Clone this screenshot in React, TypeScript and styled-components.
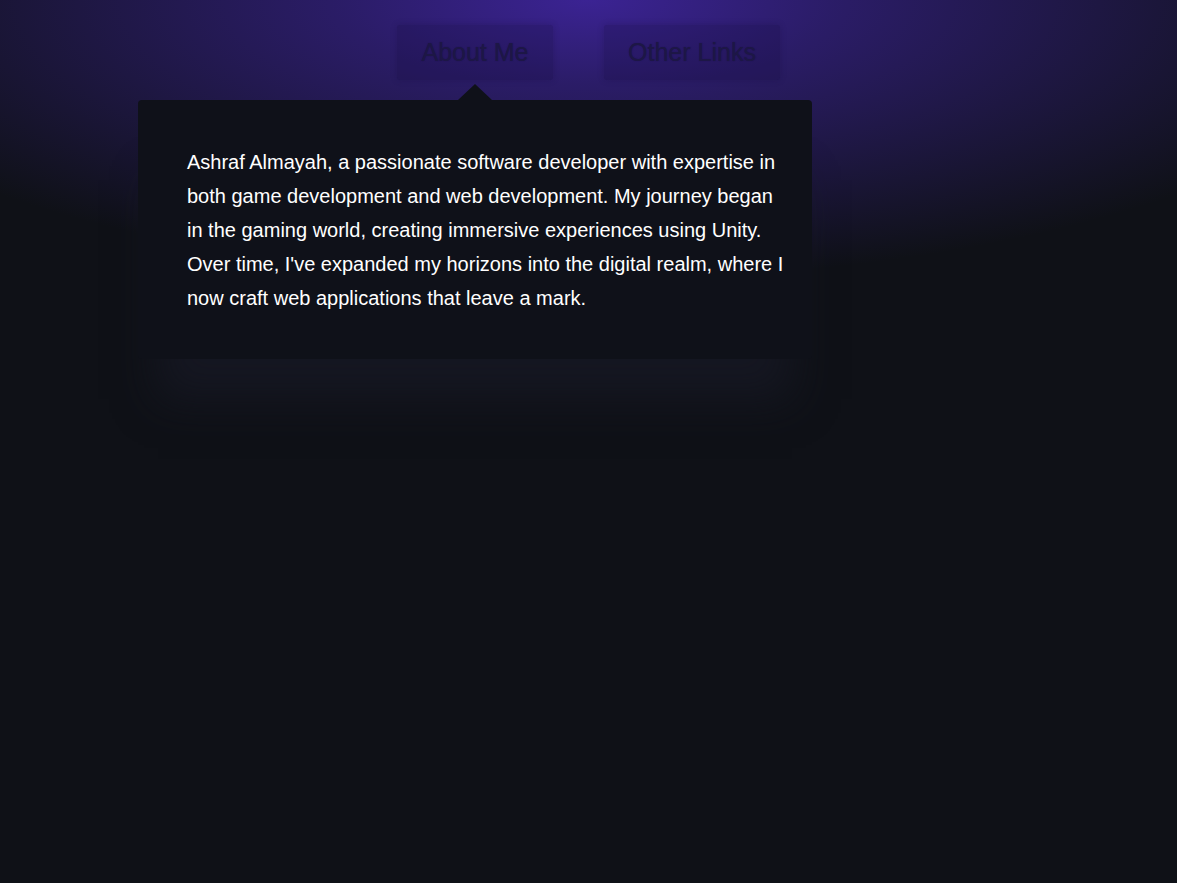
import React from "react";
import styled, { createGlobalStyle } from "styled-components";

const Global = createGlobalStyle`
  html, body { margin: 0; padding: 0; }
  body {
    background: #0f1117;
    font-family: "Liberation Sans", Arial, sans-serif;
  }
`;

const Page = styled.div`
  min-height: 883px;
  width: 100%;
  background:
    radial-gradient(ellipse 820px 280px at 50% 0, #3b2393 0%, rgba(52, 32, 130, 0.75) 30%, rgba(15, 17, 23, 0) 100%),
    #0f1117;
  display: flex;
  flex-direction: column;
  padding-top: 25px;
  box-sizing: border-box;
`;

const Nav = styled.nav`
  display: flex;
  justify-content: center;
  gap: 51px;
`;

const Tab = styled.button<{ $w: number }>`
  width: ${(p) => p.$w}px;
  height: 55px;
  border: none;
  border-radius: 3px;
  background: rgba(20, 10, 60, 0.22);
  color: #1d1746;
  font-family: "Liberation Sans", Arial, sans-serif;
  font-size: 25px;
  text-shadow: 0 0 1px rgba(20, 15, 60, 0.6);
  box-shadow: 0 0 6px rgba(20, 10, 60, 0.25);
  cursor: pointer;
  padding: 0;
`;

const Card = styled.section`
  position: relative;
  margin: 20px 0 0 138px;
  width: 674px;
  box-sizing: border-box;
  padding: 45px 25px 44px 49px;
  background: #0f1119;
  border-radius: 4px;
  box-shadow: 0 60px 40px -20px rgba(24, 26, 38, 0.7);
`;

const Arrow = styled.span`
  position: absolute;
  top: -16px;
  left: 320px;
  width: 0;
  height: 0;
  border-left: 17px solid transparent;
  border-right: 17px solid transparent;
  border-bottom: 16px solid #0f1119;
`;

const Text = styled.p`
  margin: 0;
  color: #ffffff;
  font-size: 20px;
  line-height: 34px;
`;

export default function App() {
  return (
    <>
      <Global />
      <Page>
        <Nav>
          <Tab $w={156}>About Me</Tab>
          <Tab $w={176}>Other Links</Tab>
        </Nav>
        <Card>
          <Arrow />
          <Text>
            Ashraf Almayah, a passionate software developer with expertise in
            both game development and web development. My journey began in the
            gaming world, creating immersive experiences using Unity. Over time,
            I've expanded my horizons into the digital realm, where I now craft
            web applications that leave a mark.
          </Text>
        </Card>
      </Page>
    </>
  );
}
